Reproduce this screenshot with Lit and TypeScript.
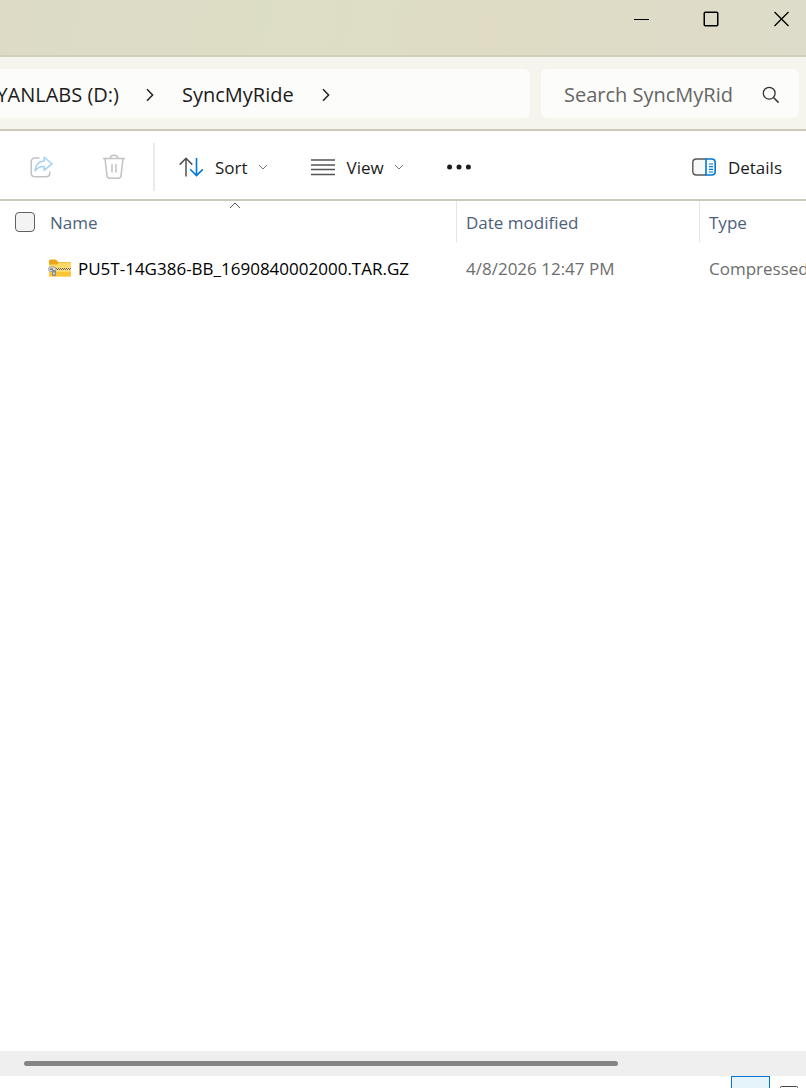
import { LitElement, html, css, svg } from "lit";
import { customElement } from "lit/decorators.js";

interface FileRow {
  name: string;
  modified: string;
  type: string;
}

const files: FileRow[] = [
  {
    name: "PU5T-14G386-BB_1690840002000.TAR.GZ",
    modified: "4/8/2026 12:47 PM",
    type: "Compressed",
  },
];

const icon = (w: number, h: number, body: unknown) =>
  html`<svg width=${w} height=${h} viewBox="0 0 ${w} ${h}" fill="none" aria-hidden="true">${body}</svg>`;

const minimizeIcon = icon(16, 16, svg`<path d="M1 8.5H16" stroke="#000"/>`);
const maximizeIcon = icon(16, 16, svg`<rect x="1.25" y="1.25" width="13.5" height="13.5" rx="1" stroke="#000" stroke-width="1.5"/>`);
const closeIcon = icon(16, 16, svg`<path d="M1.500 1L15.500 15M15.500 1L1.500 15" stroke="#000" stroke-width="1.3"/>`);
const crumbIcon = icon(8, 14, svg`<path d="M1 1.2L6.6 7L1 12.8" stroke="#222" stroke-width="1.5"/>`);
const downIcon = icon(10, 6, svg`<path d="M1 1L5 5L9 1" stroke="#777"/>`);
const searchIcon = icon(18, 18, svg`<circle cx="7.2" cy="7.2" r="5.9" stroke="#333" stroke-width="1.3"/><path d="M11.5 11.5L16.6 16.6" stroke="#333" stroke-width="1.5"/>`);
const shareIcon = icon(24, 24, svg`
  <path d="M9.5 3H5Q1.2 3 1.2 6.8V18Q1.2 21.8 5 21.8H16Q19.8 21.8 19.8 18V16.5" stroke="#c2c2c2" stroke-width="1.5"/>
  <path d="M14.2 2.2L22 8.8L14.2 15.2V11.6C10 11.3 7.3 13 5 15.8C5.5 10.2 8.5 6.3 14.2 6Z" stroke="#a6d0f0" stroke-width="1.5" stroke-linejoin="round"/>`);
const trashIcon = icon(24, 26, svg`
  <path d="M1 4.5H23M8.3 4.3C8.3 0.3 15.7 0.3 15.7 4.3M3 4.5L5 21.7Q5.3 24.2 7.6 24.2H16.4Q18.7 24.2 19 21.7L21 4.5M10 10V18.5M14 10V18.5" stroke="#c2c2c2" stroke-width="1.5"/>`);
const sortIcon = icon(24, 20, svg`
  <path d="M7 19.5V1.5M0.7 7.6L7 1.3L13.3 7.6" stroke="#505050" stroke-width="1.5"/>
  <path d="M17.5 1V18.3M11.2 12.2L17.5 18.5L23.8 12.2" stroke="#0078d4" stroke-width="1.6"/>`);
const viewIcon = icon(24, 18, svg`<path d="M0 2H24M0 7H24M0 11.5H24M0 16.5H24" stroke="#555" stroke-width="1.4"/>`);
const moreIcon = icon(24, 6, svg`<circle cx="2.6" cy="3" r="2.5" fill="#1b1b1b"/><circle cx="12" cy="3" r="2.5" fill="#1b1b1b"/><circle cx="21.4" cy="3" r="2.5" fill="#1b1b1b"/>`);
const detailsIcon = icon(24, 18, svg`
  <path d="M14 1H4.5Q0.8 1 0.8 4.5V13.5Q0.8 17 4.5 17H14" fill="#f8f8f8" stroke="#555" stroke-width="1.4"/>
  <path d="M14 1H19.5Q23.2 1 23.2 4.5V13.5Q23.2 17 19.5 17H14Z" fill="#f3f9fe" stroke="#0078d4" stroke-width="1.6"/>
  <path d="M17 6H21M17 8.7H21M17 11.4H21M17 14H21" stroke="#0078d4" stroke-width="1.2"/>`);
const sortedIcon = icon(12, 7, svg`<path d="M1 6L6 1L11 6" stroke="#555"/>`);
const zipIcon = icon(24, 18, svg`
  <path d="M1 2Q1 0.5 2.5 0.5H8L10 3H22Q23 3 23 4V8H1Z" fill="#eba51c"/>
  <path d="M1 5.5H9L11 3.5H22.5Q23 3.5 23 4V16.5Q23 17.5 22 17.5H2Q1 17.5 1 16.5Z" fill="#ffd966"/>
  <path d="M1 13H23V16.5Q23 17.5 22 17.5H2Q1 17.5 1 16.5Z" fill="#fcc536"/>
  <path d="M8 10H23" stroke="#f0dc98" stroke-width="3"/>
  <path d="M8 9.5H23" stroke="#6e6235" stroke-dasharray="1 1"/>
  <path d="M9 10.5H23" stroke="#6e6235" stroke-dasharray="1 1"/>
  <rect x="0.5" y="8" width="7.5" height="4.5" rx="2" fill="#dcdcdc" stroke="#a2a2a2"/>
  <rect x="2" y="9.5" width="3" height="1.5" fill="#777"/>
  <rect x="4" y="11" width="4" height="6" rx="1" fill="#8b8b8b"/>
  <rect x="5.3" y="13.5" width="1.4" height="2" fill="#f0f0f0"/>`);

@customElement("app-root")
export class AppRoot extends LitElement {
  static styles = css`
    :host {
      display: flex;
      flex-direction: column;
      height: 100vh;
      overflow: hidden;
      background: #fff;
      color: #1b1b1b;
      font: 17px/24px "Open Sans", "Segoe UI", sans-serif;
    }
    * { box-sizing: border-box; }
    svg { display: block; flex: none; }
    button {
      display: flex;
      align-items: center;
      padding: 0;
      border: 0;
      background: none;
      color: inherit;
      font: inherit;
    }
    .titlebar {
      display: flex;
      flex: none;
      justify-content: flex-end;
      gap: 54px;
      height: 57px;
      padding: 11px 17px 0 0;
      border-bottom: 2px solid #d0cdb8;
      background: linear-gradient(100deg, #dddbc6 0%, #dddcc6 20%, #dddec5 38%, #dfdbc4 60%, #dddcca 100%);
    }
    .titlebar button { height: 16px; }
    .address {
      display: flex;
      flex: none;
      gap: 11px;
      height: 74px;
      padding: 12px 7px 11px 0;
      border-bottom: 2px solid #cbc8b7;
      background: #f5f4ed;
      font-size: 20px;
    }
    .crumbs {
      display: flex;
      flex: 1;
      align-items: center;
      min-width: 0;
      padding-top: 2px;
      border-radius: 0 6px 6px 0;
      background: #fcfcfa;
    }
    .crumbs a { color: inherit; text-decoration: none; white-space: nowrap; }
    .crumbs .drive {
      display: flex;
      justify-content: flex-end;
      width: 119px;
      margin-right: 27px;
      overflow: hidden;
    }
    .crumbs .folder { margin: 0 28px; }
    .search {
      display: flex;
      flex: none;
      align-items: center;
      justify-content: space-between;
      width: 258px;
      padding: 2px 19px 0 23px;
      border-radius: 6px;
      background: #fcfcfa;
    }
    .search input {
      width: 176px;
      padding: 0;
      border: 0;
      outline: 0;
      background: none;
      font: inherit;
    }
    .search input::placeholder { color: #666; opacity: 1; }
    .toolbar {
      display: flex;
      flex: none;
      align-items: center;
      height: 70px;
      padding: 4px 24px 0 30px;
      border-bottom: 2px solid #cbc8b7;
    }
    .toolbar span { padding-top: 2px; }
    .toolbar .share { margin-right: 48px; }
    .rule { width: 2px; height: 48px; margin: 0 24px 0 27px; background: #ebebeb; }
    .toolbar .menu { gap: 12px; margin-right: 43px; }
    .toolbar .menu svg:last-child { margin-left: -2px; }
    .toolbar .details { gap: 12px; margin-left: auto; }
    .list { flex: 1; min-height: 0; overflow: hidden; }
    table { width: 100%; border-spacing: 0; table-layout: fixed; }
    .col-name { width: 457px; }
    .col-date { width: 243px; }
    th, td {
      padding: 2px 0 0 9px;
      overflow: hidden;
      text-align: left;
      font-weight: 400;
      white-space: nowrap;
    }
    th { position: relative; height: 41px; color: #4c607a; border-right: 1px solid #e5e5e5; }
    th:last-child { border-right: 0; }
    td { height: 51px; color: #6d6d6d; }
    th:first-child { padding: 0 0 0 15px; }
    td:first-child { padding: 0 0 0 48px; color: #000; }
    .cell { display: flex; align-items: center; gap: 6px; }
    .cell span, .head span { padding-top: 2px; }
    .head { display: flex; align-items: center; gap: 15px; }
    .head input {
      appearance: none;
      width: 20px;
      height: 20px;
      margin: 0;
      border: 1px solid #606060;
      border-radius: 4px;
      background: #f3f3f3;
    }
    .sorted { position: absolute; top: 1px; left: 229px; }
    .scroll { flex: none; height: 25px; padding: 10px 188px 0 24px; background: #efefef; }
    .thumb { height: 5px; border-radius: 3px; background: #858585; }
    .status {
      display: flex;
      flex: none;
      justify-content: flex-end;
      gap: 10px;
      height: 12px;
      padding-right: 8px;
      overflow: hidden;
    }
    .status button { flex: none; align-items: flex-start; height: 28px; }
    .status .mode-details { width: 39px; border: 1px solid #0078d4; background: #e5f3fb; }
    .status .mode-icons { padding-top: 10px; }
  `;

  render() {
    return html`
      <header class="titlebar">
        <button aria-label="Minimize">${minimizeIcon}</button>
        <button aria-label="Maximize">${maximizeIcon}</button>
        <button aria-label="Close">${closeIcon}</button>
      </header>
      <div class="address">
        <nav class="crumbs" aria-label="Path">
          <a class="drive" href="#drive">YANLABS (D:)</a>
          ${crumbIcon}
          <a class="folder" href="#folder">SyncMyRide</a>
          ${crumbIcon}
        </nav>
        <label class="search">
          <input type="text" aria-label="Search" placeholder="Search SyncMyRid" />
          ${searchIcon}
        </label>
      </div>
      <div class="toolbar" role="toolbar">
        <button class="share" aria-label="Share" disabled>${shareIcon}</button>
        <button aria-label="Delete" disabled>${trashIcon}</button>
        <div class="rule"></div>
        <button class="menu">${sortIcon}<span>Sort</span>${downIcon}</button>
        <button class="menu">${viewIcon}<span>View</span>${downIcon}</button>
        <button aria-label="More">${moreIcon}</button>
        <button class="details">${detailsIcon}<span>Details</span></button>
      </div>
      <main class="list">
        <table>
          <colgroup>
            <col class="col-name" />
            <col class="col-date" />
            <col />
          </colgroup>
          <thead>
            <tr>
              <th>
                <div class="head">
                  <input type="checkbox" aria-label="Select all" />
                  <span>Name</span>
                </div>
                <div class="sorted">${sortedIcon}</div>
              </th>
              <th>Date modified</th>
              <th>Type</th>
            </tr>
          </thead>
          <tbody>
            ${files.map(
              (f) => html`<tr>
                <td><div class="cell">${zipIcon}<span>${f.name}</span></div></td>
                <td>${f.modified}</td>
                <td>${f.type}</td>
              </tr>`
            )}
          </tbody>
        </table>
      </main>
      <div class="scroll"><div class="thumb"></div></div>
      <footer class="status">
        <button class="mode-details" aria-label="Details view"></button>
        <button class="mode-icons" aria-label="Large icons view">
          ${icon(18, 18, svg`<rect x="0.5" y="0.5" width="17" height="17" rx="1" stroke="#444"/>`)}
        </button>
      </footer>
    `;
  }
}
